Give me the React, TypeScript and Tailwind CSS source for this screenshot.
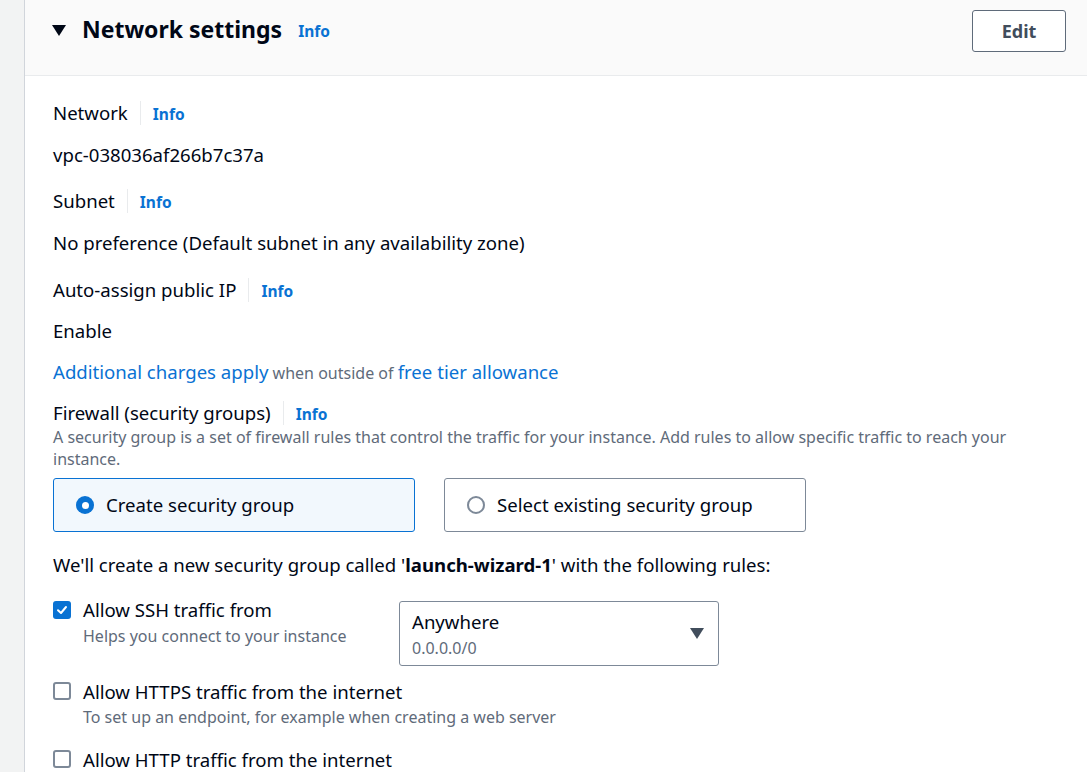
import React from "react";

function InfoLink() {
  return <span className="text-[15.5px] font-bold text-[#0972d3]">Info</span>;
}

function Label({ text }: { text: string }) {
  return (
    <div className="flex items-center h-[24px]">
      <span className="text-[18.6px] text-[#000716]">{text}</span>
      <span className="mx-[12px] h-[24px] w-px bg-[#e9ebed]" />
      <span className="mt-[2px]"><InfoLink /></span>
    </div>
  );
}

function Checkbox({ checked }: { checked?: boolean }) {
  if (checked) {
    return (
      <div className="w-[18px] h-[18px] rounded-[3px] bg-[#0972d3] flex items-center justify-center shrink-0">
        <svg width="12" height="12" viewBox="0 0 12 12">
          <path d="M2 6.2 L5 9 L10 3" fill="none" stroke="white" strokeWidth="2" strokeLinecap="round" strokeLinejoin="round" />
        </svg>
      </div>
    );
  }
  return <div className="w-[18px] h-[18px] rounded-[3px] border-2 border-[#7d8998] bg-white shrink-0" />;
}

export default function App() {
  return (
    <div className="flex w-[1087px] h-[772px] overflow-hidden bg-white" style={{ fontFamily: '"Noto Sans", "Open Sans", Arial, sans-serif' }}>
      <div className="w-[25px] shrink-0 bg-[#f2f3f3] border-r border-[#d1d5db]" />
      <div className="flex-1 flex flex-col">
        <div className="h-[76px] shrink-0 bg-[#fafafa] border-b border-[#e9ebed] pl-[27px] pr-[21px] pt-[10px]">
          <div className="h-[42px] flex items-center">
            <svg width="14" height="11" viewBox="0 0 14 11" className="mb-[1px]">
              <path d="M0 0 H14 L7 11 Z" fill="#000716" />
            </svg>
            <span className="ml-[16px] text-[23px] font-bold text-[#000716] -mt-[4px]">Network settings</span>
            <span className="ml-[16px]"><InfoLink /></span>
            <div className="flex-1" />
            <button className="w-[94px] h-[42px] rounded-[3px] border border-[#5f6b7a] bg-white text-[18px] font-bold text-[#414d5c]">Edit</button>
          </div>
        </div>

        <div className="pl-[28px] pt-[25px] text-[#000716]">
          <Label text="Network" />
          <div className="mt-[18px] h-[24px] text-[18.6px] leading-[24px]">vpc-038036af266b7c37a</div>

          <div className="mt-[22px]"><Label text="Subnet" /></div>
          <div className="mt-[18px] h-[24px] text-[18.6px] leading-[24px]">No preference (Default subnet in any availability zone)</div>

          <div className="mt-[23px]"><Label text="Auto-assign public IP" /></div>
          <div className="mt-[17px] h-[24px] text-[18.6px] leading-[24px]">Enable</div>

          <div className="mt-[17px] h-[24px] leading-[24px]">
            <span className="text-[18.6px] text-[#0972d3]">Additional charges apply</span>
            <span className="text-[16px] text-[#5f6b7a]"> when outside of </span>
            <span className="text-[18.6px] text-[#0972d3]">free tier allowance</span>
          </div>

          <div className="mt-[17px]"><Label text="Firewall (security groups)" /></div>
          <div className="mt-[1px] pr-[60px] text-[16px] leading-[22px] text-[#5f6b7a]">
            A security group is a set of firewall rules that control the traffic for your instance. Add rules to allow specific traffic to reach your instance.
          </div>

          <div className="mt-[8px] flex gap-[29px]">
            <div className="w-[362px] h-[54px] rounded-[3px] border border-[#0972d3] bg-[#f2f8fd] flex items-center pl-[22px]">
              <div className="w-[18px] h-[18px] rounded-full bg-[#0972d3] flex items-center justify-center">
                <div className="w-[7px] h-[7px] rounded-full bg-white" />
              </div>
              <span className="ml-[12px] text-[18.6px]">Create security group</span>
            </div>
            <div className="w-[362px] h-[54px] rounded-[3px] border border-[#7d8998] bg-white flex items-center pl-[22px]">
              <div className="w-[18px] h-[18px] rounded-full border-2 border-[#7d8998]" />
              <span className="ml-[12px] text-[18.6px]">Select existing security group</span>
            </div>
          </div>

          <div className="mt-[21px] h-[24px] text-[18.6px] leading-[24px]">
            We'll create a new security group called '<b>launch-wizard-1</b>' with the following rules:
          </div>

          <div className="mt-[24px] flex">
            <div className="flex w-[346px] -mt-[3px]">
              <div className="pt-[3px]"><Checkbox checked /></div>
              <div className="ml-[12px]">
                <div className="h-[24px] text-[18.6px] leading-[24px]">Allow SSH traffic from</div>
                <div className="mt-[4px] text-[16px] leading-[20px] text-[#5f6b7a]">Helps you connect to your instance</div>
              </div>
            </div>
            <div className="w-[320px] h-[65px] rounded-[3px] border border-[#7d8998] flex items-center pl-[12px] pr-[14px]">
              <div className="flex-1 pt-[4px]">
                <div className="text-[18.6px] leading-[24px]">Anywhere</div>
                <div className="text-[16px] leading-[28px] text-[#5f6b7a]">0.0.0.0/0</div>
              </div>
              <svg width="14" height="11" viewBox="0 0 14 11">
                <path d="M0 0 H14 L7 11 Z" fill="#414d5c" />
              </svg>
            </div>
          </div>

          <div className="mt-[14px] flex">
            <div className="pt-[2px]"><Checkbox /></div>
            <div className="ml-[12px]">
              <div className="h-[24px] text-[18.6px] leading-[24px]">Allow HTTPS traffic from the internet</div>
              <div className="mt-[3px] text-[16px] leading-[20px] text-[#5f6b7a]">To set up an endpoint, for example when creating a web server</div>
            </div>
          </div>

          <div className="mt-[21px] flex">
            <div className="pt-[2px]"><Checkbox /></div>
            <div className="ml-[12px]">
              <div className="h-[24px] text-[18.6px] leading-[24px]">Allow HTTP traffic from the internet</div>
            </div>
          </div>
        </div>
      </div>
    </div>
  );
}
